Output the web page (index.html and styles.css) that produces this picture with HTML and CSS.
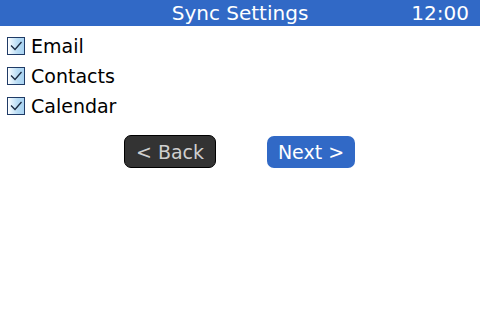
FILE: index.html
```html
<!DOCTYPE html>
<html lang="en">
<head>
  <meta charset="UTF-8">
  <title>Sync Settings</title>
  <link rel="stylesheet" href="styles.css">
</head>
<body>
  <div class="title-bar">
    <span class="title">Sync Settings</span>
    <span class="clock">12:00</span>
  </div>

  <div class="options">
    <label class="option">
      <span class="box checked"><svg viewBox="0 0 16 16" width="16" height="16"><path d="M3 7.5 L7 11.5 L13.5 4" fill="none" stroke="#1a2a40" stroke-width="1.3"/></svg></span>
      Email
    </label>
    <label class="option">
      <span class="box checked"><svg viewBox="0 0 16 16" width="16" height="16"><path d="M3 7.5 L7 11.5 L13.5 4" fill="none" stroke="#1a2a40" stroke-width="1.3"/></svg></span>
      Contacts
    </label>
    <label class="option">
      <span class="box checked"><svg viewBox="0 0 16 16" width="16" height="16"><path d="M3 7.5 L7 11.5 L13.5 4" fill="none" stroke="#1a2a40" stroke-width="1.3"/></svg></span>
      Calendar
    </label>
  </div>

  <div class="buttons">
    <button class="btn back">&lt; Back</button>
    <button class="btn next">Next &gt;</button>
  </div>
</body>
</html>
```

FILE: styles.css
```css
* {
  box-sizing: border-box;
  margin: 0;
  padding: 0;
}

body {
  font-family: 'DejaVu Sans', sans-serif;
  background: #fff;
  width: 480px;
  height: 320px;
  overflow: hidden;
}

.title-bar {
  position: relative;
  height: 26px;
  background: #3169c6;
  color: #fff;
  font-size: 20px;
  line-height: 26px;
  text-align: center;
}

.clock {
  position: absolute;
  right: 11px;
  top: 0;
}

.options {
  padding-top: 5px;
  padding-left: 7px;
}

.option {
  display: flex;
  align-items: center;
  gap: 6px;
  height: 30px;
  font-size: 19px;
  color: #000;
}

.box {
  width: 18px;
  height: 18px;
  border: 1px solid #1f3b66;
  background: linear-gradient(to right, #ffffff 0%, #dff0fb 25%, #b8dcf4 60%, #a9d3f1 100%);
  display: flex;
  align-items: center;
  justify-content: center;
}

.buttons {
  display: flex;
  justify-content: center;
  gap: 51px;
  margin-top: 14px;
  padding-right: 1px;
}

.btn {
  font-family: 'DejaVu Sans', sans-serif;
  font-size: 19px;
  height: 33px;
  border-radius: 7px;
  cursor: pointer;
}

.back {
  width: 92px;
  background: #333;
  color: #cfcfcf;
  border: 1px solid #000;
}

.next {
  width: 88px;
  height: 32px;
  margin-top: 1px;
  background: #3169c6;
  color: #fff;
  border: none;
}
```
